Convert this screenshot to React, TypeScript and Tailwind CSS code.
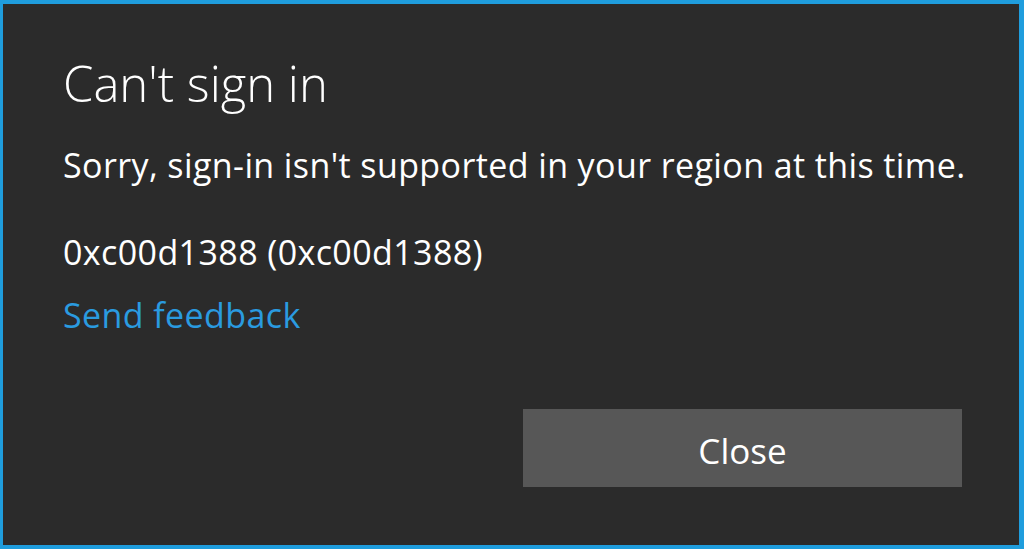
export default function App() {
  return (
    <div className="w-[1024px] h-[549px] bg-[#2b2b2b] border-t-4 border-b-4 border-l-[3px] border-r-[5px] border-[#1f9ddd] text-white flex flex-col" style={{ fontFamily: '"Open Sans", "Noto Sans", sans-serif' }}>
      <div className="pl-[60px] pt-[49px] flex flex-col">
        <div className="text-[49px] leading-[60px] font-light">Can't sign in</div>
        <div className="text-[34px] leading-[44px] mt-[30px] tracking-[0.4px]">Sorry, sign-in isn't supported in your region at this time.</div>
        <div className="text-[34px] leading-[44px] mt-[43px] tracking-[0.4px]">0xc00d1388 (0xc00d1388)</div>
        <div className="text-[34px] leading-[44px] mt-[19px] tracking-[0.4px] text-[#2a9be0]">Send feedback</div>
      </div>
      <div className="flex justify-end pr-[57px] mt-auto mb-[58px]">
        <button className="w-[439px] h-[78px] pt-[6px] bg-[#575757] text-[35px] text-white flex items-center justify-center">Close</button>
      </div>
    </div>
  );
}
